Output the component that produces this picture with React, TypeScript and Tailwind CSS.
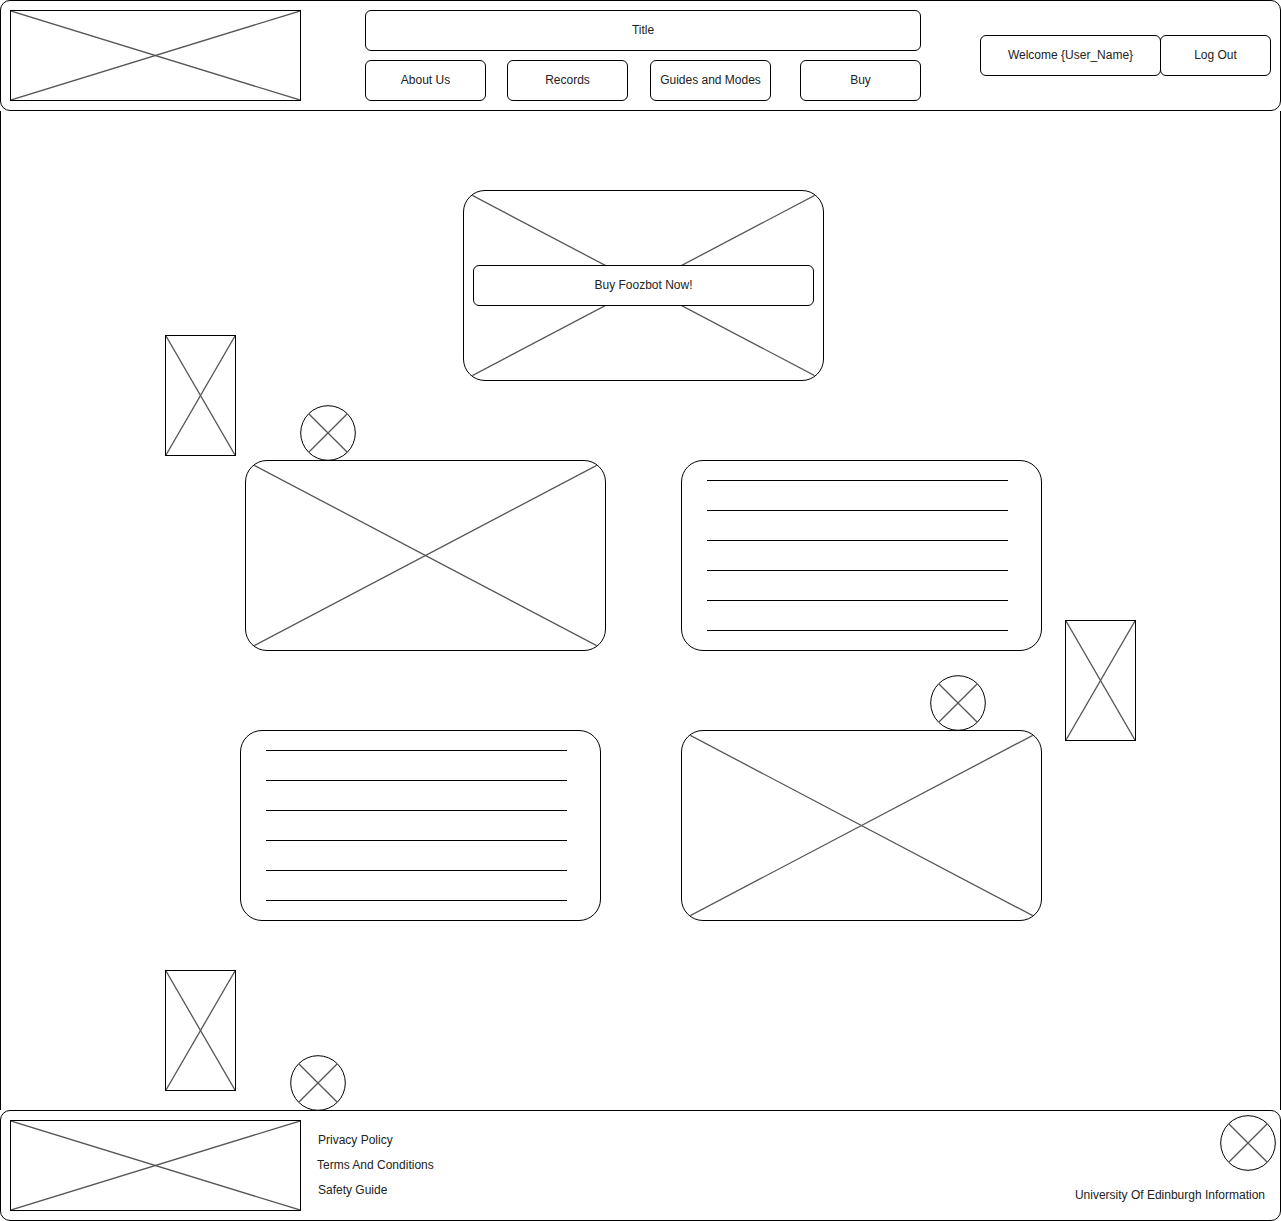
import React from "react";

// crossed placeholder, used for every image slot in the wireframe
function Cross({ stroke = "#555" }: { stroke?: string }) {
  return (
    <svg className="absolute inset-0 w-full h-full" viewBox="0 0 100 100" preserveAspectRatio="none">
      <line x1="0" y1="0" x2="100" y2="100" stroke={stroke} strokeWidth="1.3" vectorEffect="non-scaling-stroke" />
      <line x1="100" y1="0" x2="0" y2="100" stroke={stroke} strokeWidth="1.3" vectorEffect="non-scaling-stroke" />
    </svg>
  );
}

function ImgBox({ className }: { className: string }) {
  return (
    <div className={"relative border border-black bg-white " + className}>
      <Cross />
    </div>
  );
}

function CircleIcon({ className }: { className: string }) {
  return (
    <svg className={className} width="56" height="56" viewBox="0 0 56 56">
      <circle cx="28" cy="28" r="27.3" fill="white" stroke="black" strokeWidth="1" />
      <line x1="8.7" y1="8.7" x2="47.3" y2="47.3" stroke="#555" strokeWidth="1.3" />
      <line x1="47.3" y1="8.7" x2="8.7" y2="47.3" stroke="#555" strokeWidth="1.3" />
    </svg>
  );
}

function Btn({ label, className }: { label: string; className: string }) {
  return (
    <div className={"flex items-center justify-center border border-black rounded-[6px] bg-white pb-[2px] text-[12px] text-[#222] " + className}>
      {label}
    </div>
  );
}

function LinesCard({ className }: { className: string }) {
  return (
    <div className={"absolute w-[361px] h-[191px] border border-black rounded-[22px] bg-white pt-[19px] pl-[25px] " + className}>
      <div className="flex flex-col gap-[29px]">
        {[0, 1, 2, 3, 4, 5].map((i) => (
          <div key={i} className="w-[301px] h-px bg-black" />
        ))}
      </div>
    </div>
  );
}

function CrossCard({ className }: { className: string }) {
  return (
    <div className={"absolute w-[361px] h-[191px] border border-black rounded-[22px] bg-white overflow-hidden " + className}>
      <Cross />
    </div>
  );
}

export default function App() {
  return (
    <div className="w-[1281px] h-[1221px] bg-white flex flex-col" style={{ fontFamily: '"Liberation Sans", Arial, sans-serif' }}>
      {/* Header */}
      <div className="h-[111px] shrink-0 border border-black rounded-[10px] flex items-start pl-[9px] pt-[9px]">
        <ImgBox className="w-[291px] h-[91px]" />
        <div className="ml-[64px] w-[556px] flex flex-col">
          <Btn label="Title" className="h-[41px] w-full" />
          <div className="mt-[9px] flex">
            <Btn label="About Us" className="w-[121px] h-[41px]" />
            <Btn label="Records" className="w-[121px] h-[41px] ml-[21px]" />
            <Btn label="Guides and Modes" className="w-[121px] h-[41px] ml-[22px]" />
            <Btn label="Buy" className="w-[121px] h-[41px] ml-[29px]" />
          </div>
        </div>
        <div className="ml-[59px] mt-[25px] flex">
          <Btn label="Welcome {User_Name}" className="w-[181px] h-[41px]" />
          <Btn label="Log Out" className="w-[111px] h-[41px] -ml-px" />
        </div>
      </div>

      {/* Canvas */}
      <div className="relative flex-1 border-x border-black">
        <div className="absolute left-[462px] top-[79px] w-[361px] h-[191px] border border-black rounded-[22px] bg-white overflow-hidden flex items-center justify-center">
          <Cross />
          <Btn label="Buy Foozbot Now!" className="relative w-[341px] h-[41px]" />
        </div>

        <ImgBox className="absolute! left-[164px] top-[224px] w-[71px] h-[121px]" />
        <CircleIcon className="absolute left-[299px] top-[294px]" />

        <CrossCard className="left-[244px] top-[349px]" />
        <LinesCard className="left-[680px] top-[349px]" />

        <ImgBox className="absolute! left-[1064px] top-[509px] w-[71px] h-[121px]" />
        <CircleIcon className="absolute left-[929px] top-[564px]" />

        <LinesCard className="left-[239px] top-[619px]" />
        <CrossCard className="left-[680px] top-[619px]" />

        <ImgBox className="absolute! left-[164px] top-[859px] w-[71px] h-[121px]" />
        <CircleIcon className="absolute left-[289px] top-[944px] z-10" />
      </div>

      {/* Footer */}
      <div className="h-[111px] shrink-0 border border-black rounded-[10px] flex items-start pl-[9px] pt-[9px]">
        <ImgBox className="w-[291px] h-[91px]" />
        <div className="ml-[17px] pt-[8px] flex flex-col text-[12px] leading-[25px] text-[#222]">
          <span>Privacy Policy</span>
          <span className="-ml-px">Terms And Conditions</span>
          <span>Safety Guide</span>
        </div>
        <div className="ml-auto -mt-[5px] pr-[4px] flex flex-col items-end">
          <CircleIcon className="" />
          <span className="mt-[16px] mr-[11px] text-[12px] leading-[16px] text-[#222]">University Of Edinburgh Information</span>
        </div>
      </div>
    </div>
  );
}
